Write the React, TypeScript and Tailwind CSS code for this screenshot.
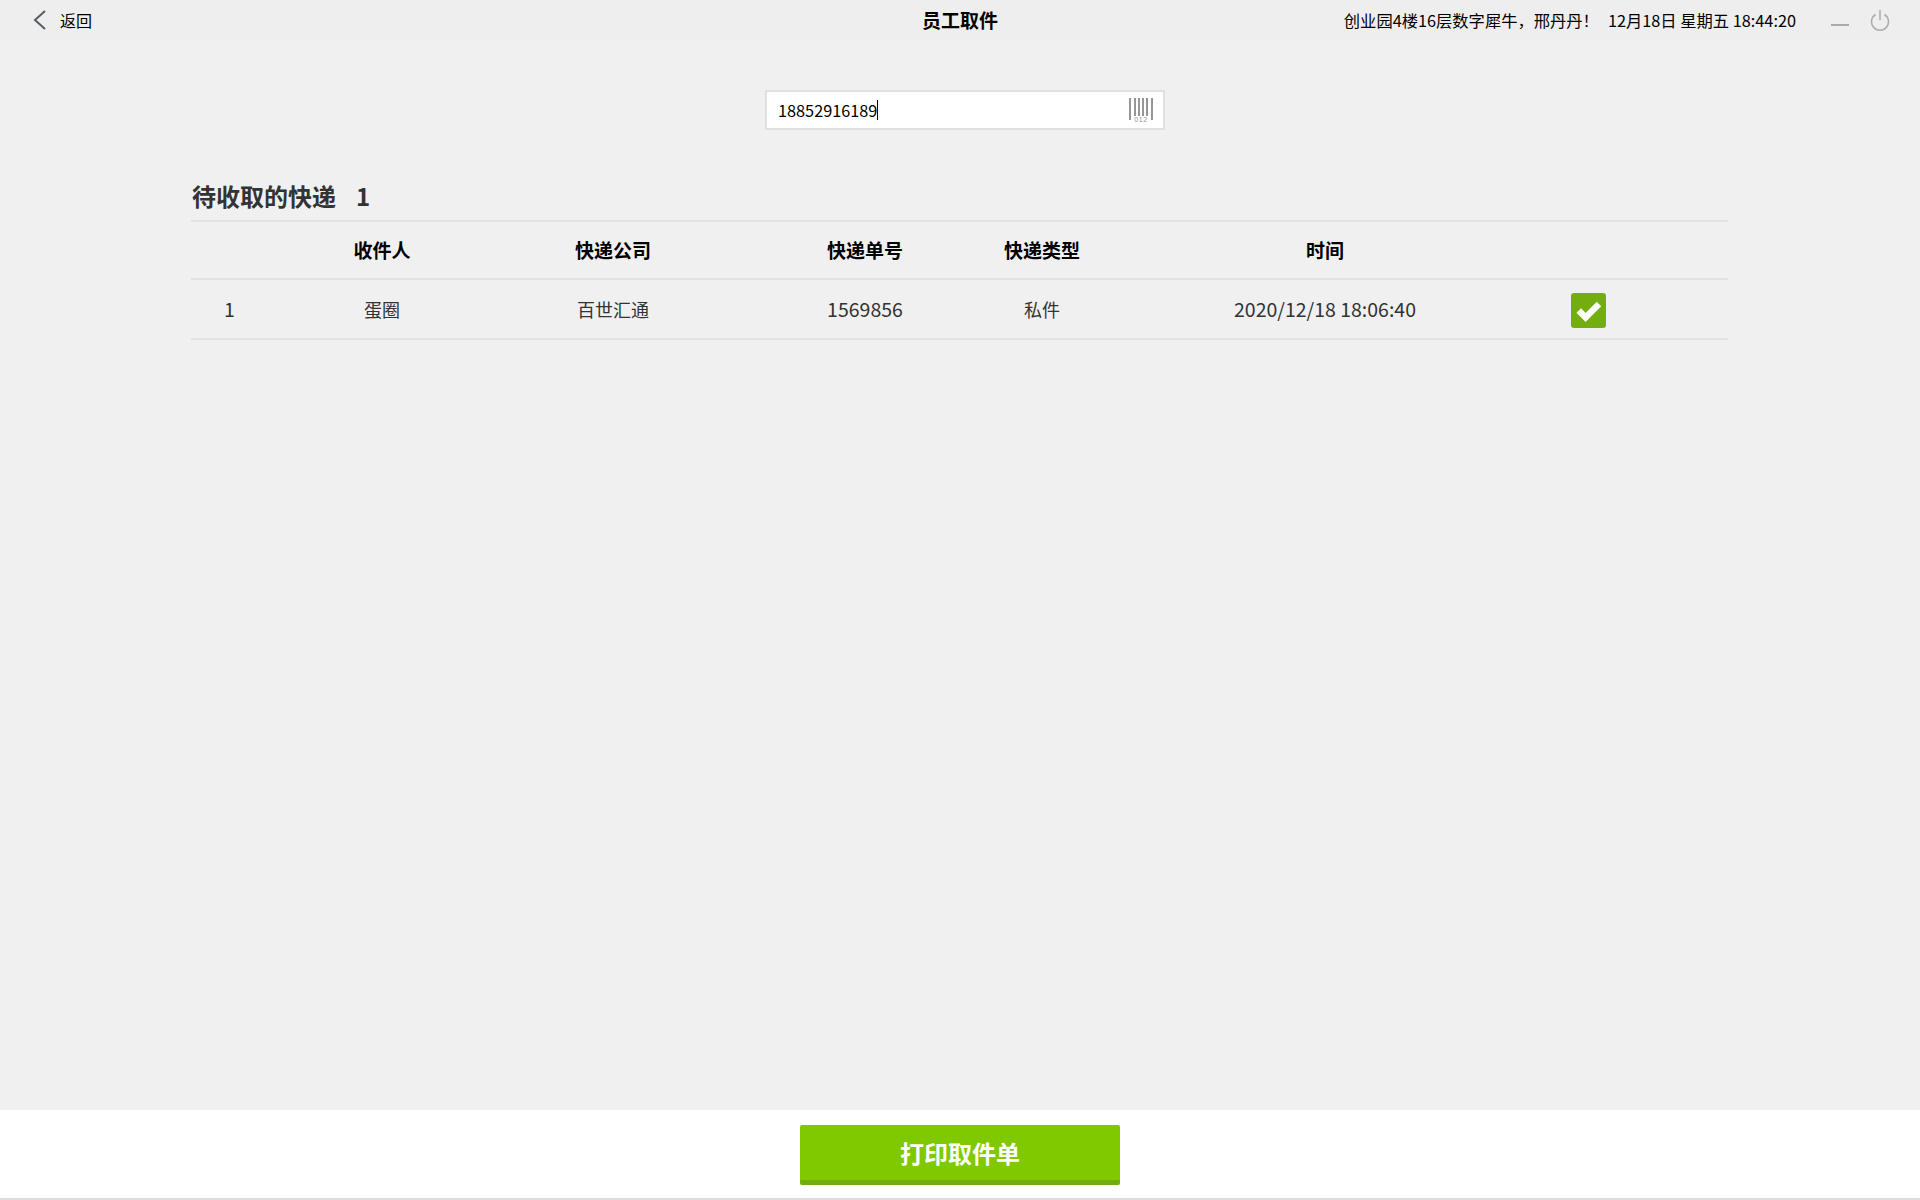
const cjk = "font-['Noto_Sans_CJK_SC','Liberation_Sans',sans-serif]"

const columns = 'grid grid-cols-[77px_228px_234px_270px_84px_482px_44px_1fr] items-center text-center'

const headers = ['', '收件人', '快递公司', '快递单号', '快递类型', '时间', '', '']
const rows = [
  { no: '1', name: '蛋圈', company: '百世汇通', code: '1569856', type: '私件', time: '2020/12/18 18:06:40' },
]

function BarcodeIcon() {
  return (
    <svg width="24" height="24" viewBox="0 0 24 24" className="shrink-0">
      <g fill="#969696">
        <rect x="0" y="0" width="2" height="22" />
        <rect x="5" y="0" width="2" height="18" />
        <rect x="9" y="0" width="2" height="18" />
        <rect x="13" y="0" width="2" height="18" />
        <rect x="17" y="0" width="2" height="18" />
        <rect x="22" y="0" width="2" height="22" />
      </g>
      <text x="12" y="24" textAnchor="middle" fontSize="7" letterSpacing="0.6" fill="#969696" fontFamily="'Liberation Sans', sans-serif">012</text>
    </svg>
  )
}

function CheckBox() {
  return (
    <div className="w-[35px] h-[35px] mt-[2px] rounded-[3px] bg-[#73ad10] mx-auto">
      <svg width="35" height="35" viewBox="0 0 35 35">
        <path d="M7.8 17.6 L14.6 24.4 L28 11" fill="none" stroke="#fff" strokeWidth="6.4" />
      </svg>
    </div>
  )
}

export default function App() {
  return (
    <div className={`${cjk} h-screen flex flex-col bg-[#f0f0f0] text-[#333]`}>
      {/* Top bar */}
      <header className="h-10 shrink-0 grid grid-cols-[1fr_auto_1fr] items-center bg-[#eeeeee] text-black">
        <div className="flex items-center pl-[32px]">
          <svg width="15" height="22" viewBox="0 0 15 22" className="text-[#555d68]">
            <path d="M13 2 L3 11 L13 20" fill="none" stroke="currentColor" strokeWidth="2" />
          </svg>
          <span className="ml-[13px] text-base">返回</span>
        </div>
        <div className="text-[19px] font-bold">员工取件</div>
        <div className="flex items-center justify-end pr-[30px] text-[16.3px]">
          <span>创业园4楼16层数字犀牛，邢丹丹！</span>
          <span className="ml-[9px]">12月18日 星期五 18:44:20</span>
          <span className="ml-[35px] w-[18px] h-[2px] mt-[10px] bg-[#ababab]" />
          <svg width="20" height="22" viewBox="0 0 20 22" className="ml-[21px] text-[#ababab]">
            <path d="M5.5 5.5 A8.5 8.5 0 1 0 14.5 5.5" fill="none" stroke="currentColor" strokeWidth="1.5" />
            <path d="M10 1 V11" fill="none" stroke="currentColor" strokeWidth="1.5" />
          </svg>
        </div>
      </header>

      <main className="flex-1 flex flex-col pt-[50px]">
        {/* Search box */}
        <div className="ml-[765px] w-[400px] h-10 flex items-center justify-between bg-white border-2 border-[#e0e0e0] pl-[11px] pr-[10px]">
          <div className="flex items-center text-[16.3px] text-black">
            <span>18852916189</span>
            <span className="w-px h-[20px] bg-black" />
          </div>
          <BarcodeIcon />
        </div>

        {/* List */}
        <section className="mt-[47px] ml-[191px] w-[1537px]">
          <h2 className="flex items-start h-[43px] pl-px pt-[3px] text-2xl font-bold">
            <span>待收取的快递</span>
            <span className="ml-[20px]">1</span>
          </h2>
          <div className={`${columns} h-[60px] border-y-2 border-[#e2e2e2] text-[19px] font-bold text-black`}>
            {headers.map((h, i) => (
              <div key={i}>{h}</div>
            ))}
          </div>
          {rows.map(r => (
            <div key={r.no} className={`${columns} h-[60px] border-b-2 border-[#e2e2e2] text-lg`}>
              <div className="text-[19.5px]">{r.no}</div>
              <div>{r.name}</div>
              <div>{r.company}</div>
              <div className="text-[19.5px]">{r.code}</div>
              <div>{r.type}</div>
              <div className="text-[19.5px]">{r.time}</div>
              <div><CheckBox /></div>
              <div />
            </div>
          ))}
        </section>
      </main>

      {/* Bottom action */}
      <footer className="h-[90px] shrink-0 flex justify-center bg-white border-b-2 border-[#dddddd] pt-[15px]">
        <button className="w-[320px] h-[60px] flex items-center justify-center rounded-[2px] bg-[#80c800] border-b-[5px] border-[#72ad0e] text-2xl font-bold text-white">
          打印取件单
        </button>
      </footer>
    </div>
  )
}
